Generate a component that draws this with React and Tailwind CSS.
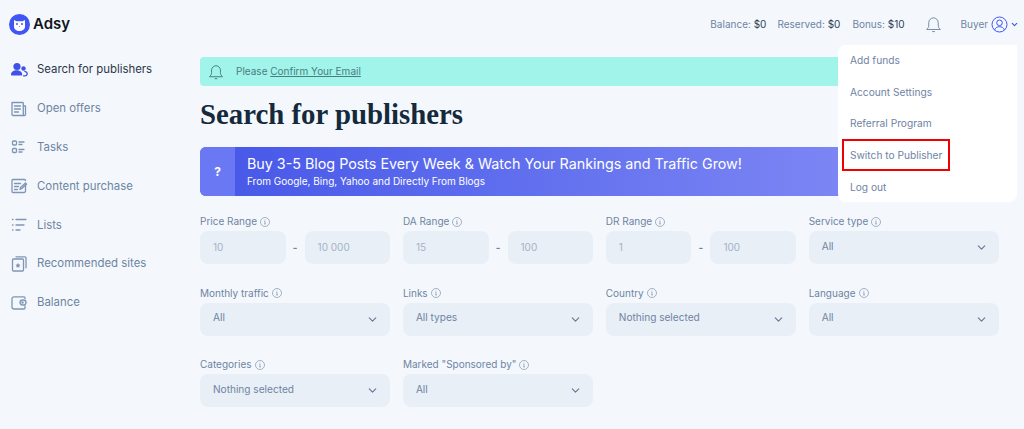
import React from 'react';
import { ChevronDown } from 'lucide-react';

const Icon = ({ children, className = 'text-[#7f95b5]' }) => (
  <svg width="18" height="18" viewBox="0 0 18 18" fill="none" stroke="currentColor" strokeWidth="1.3" strokeLinecap="round" strokeLinejoin="round" className={className}>
    {children}
  </svg>
);

const navItems = [
  {
    label: 'Search for publishers',
    active: true,
    icon: (
      <Icon className="text-[#3f51e8]">
        <circle cx="7" cy="5.500" r="3.600" fill="currentColor" stroke="none" />
        <path d="M1 13.500c0-2.700 2.400-4.300 5.600-4.300s5.600 1.600 5.600 4.300c0 .6-.4 1-1 1H2c-.6 0-1-.4-1-1z" fill="currentColor" stroke="none" />
        <circle cx="13.500" cy="7.500" r="2.200" fill="currentColor" stroke="none" />
        <path d="M13.500 14.800c2 .3 3.500-.4 3.700-1.700.2-1.300-.8-2.400-2.400-2.800" />
      </Icon>
    ),
  },
  {
    label: 'Open offers',
    icon: (
      <Icon>
        <path d="M2 2.500h10.500a.8.8 0 0 1 .8.8v12.200H3a1 1 0 0 1-1-1z" />
        <path d="M13.300 6h2.200v8.500a1 1 0 0 1-1 1h-1.200M4.500 6h6M4.500 9h6M4.500 12h4" />
      </Icon>
    ),
  },
  {
    label: 'Tasks',
    icon: (
      <Icon>
        <rect x="2.500" y="3" width="4" height="4" rx="1" />
        <rect x="2.500" y="10.500" width="4" height="4" rx="1" />
        <path d="M9 4h5M9 6.500h3M9 11.500h5M9 14h3" />
      </Icon>
    ),
  },
  {
    label: 'Content purchase',
    icon: (
      <Icon>
        <path d="M15.500 7v7a1.500 1.500 0 0 1-1.500 1.500H3A1 1 0 0 1 2 14.500V3.500a1 1 0 0 1 1-1h11.500a1 1 0 0 1 1 1" />
        <path d="M4.500 6.500h6M4.500 9.500h4M4.500 12.500h3M10 12.500l.5-2 5-4.500 1 1.200-5 4.500z" />
      </Icon>
    ),
  },
  {
    label: 'Lists',
    icon: (
      <Icon>
        <path d="M2.500 3.500h.5M2.500 9h.5M2.500 14h.5M6 3.500h10M6 9h8M6 14h4" />
      </Icon>
    ),
  },
  {
    label: 'Recommended sites',
    icon: (
      <Icon>
        <rect x="2.500" y="4" width="11" height="12" rx="1" />
        <path d="M6 1.800h9a1 1 0 0 1 1 1v10" />
        <path d="M8 7.800l.8 1.700 1.800.2-1.300 1.300.3 1.800L8 12l-1.600.8.3-1.800-1.300-1.300 1.800-.2z" fill="currentColor" stroke="none" />
      </Icon>
    ),
  },
  {
    label: 'Balance',
    icon: (
      <Icon>
        <path d="M15 4.500V3.800a1 1 0 0 0-1-1H4a2 2 0 0 0-2 2V13a2 2 0 0 0 2 2h10a1 1 0 0 0 1-1v-2" />
        <rect x="10" y="6" width="6" height="5" rx="2.500" />
        <circle cx="12.500" cy="8.500" r=".6" />
      </Icon>
    ),
  },
];

const Info = () => (
  <svg width="10" height="10" viewBox="0 0 10 10" fill="none" stroke="#7f93ad" strokeWidth=".7" className="ml-[3px] shrink-0">
    <circle cx="5" cy="5" r="4.500" />
    <path d="M4.200 4.300H5v2.500M4 6.900h2M5 2.600v.8" />
  </svg>
);

const Bell = ({ size = 18, className }) => (
  <svg width={size} height={size} viewBox="0 0 18 18" fill="none" stroke="currentColor" strokeWidth="1" strokeLinecap="round" strokeLinejoin="round" className={className}>
    <path d="M2 14c1.500-1.300 2-2.500 2-4.500V7a5 5 0 0 1 10 0v2.500c0 2 .5 3.200 2 4.500z" />
    <path d="M8 16.500h2" />
  </svg>
);

const Label = ({ children }) => (
  <div className="flex items-center h-[13px] mt-[1px] mb-[3px] text-[10px] leading-[13px] text-[#6e84a3]">
    {children}
    <Info />
  </div>
);

const RangeField = ({ label, from, to }) => (
  <div>
    <Label>{label}</Label>
    <div className="flex items-center">
      <div className="w-[86px] h-[33px] rounded-lg bg-[#e9eff6] pl-[13px] flex items-center text-[10px] text-[#a3b2c6]">{from}</div>
      <div className="w-[19px] text-center text-[10px] font-bold text-[#6e84a3]">-</div>
      <div className="w-[86px] h-[33px] rounded-lg bg-[#e9eff6] pl-[13px] flex items-center text-[10px] text-[#a3b2c6]">{to}</div>
    </div>
  </div>
);

const SelectField = ({ label, value }) => (
  <div>
    <Label>{label}</Label>
    <div className="h-[33px] rounded-lg bg-[#e9eff6] pl-[13px] pr-[11px] flex items-center justify-between text-[10.100px] text-[#6e84a3]">
      <span className="-mt-[2px]">{value}</span>
      <ChevronDown size={13} strokeWidth={2} className="text-[#62789a]" />
    </div>
  </div>
);

const Stat = ({ label, value }) => (
  <span className="text-[#6e84a3]">
    {label}: <span className="text-[#2c3e55]">{value}</span>
  </span>
);

const menuItems = ['Add funds', 'Account Settings', 'Referral Program', 'Switch to Publisher', 'Log out'];

const App = () => {
  return (
    <div className="relative w-[1024px] h-[429px] overflow-hidden bg-[#f4f8fc] font-['Inter',sans-serif]">
      <header className="h-[48px] mb-[2px] flex items-center pl-[9px] pr-[5px]">
        <div className="flex items-center">
          <svg width="21" height="21" viewBox="0 0 21 21">
            <circle cx="10.500" cy="10.500" r="10.500" fill="#3f55f4" />
            <path d="M5 6l2.500 1.300h6L16 6v6.500c0 2.800-2.500 4.500-5.500 4.500S5 15.300 5 12.500z" fill="#fff" />
            <circle cx="8" cy="10" r="1" fill="#3f55f4" />
            <circle cx="13" cy="10" r="1" fill="#3f55f4" />
            <path d="M9.800 12h1.400l-.7 1z" fill="#3f55f4" />
          </svg>
          <span className="ml-[3px] text-[15px] font-semibold text-[#10141c]">Adsy</span>
        </div>
        <div className="ml-auto flex items-center text-[10px]">
          <Stat label="Balance" value="$0" />
          <span className="ml-[11px]"><Stat label="Reserved" value="$0" /></span>
          <span className="ml-[12px]"><Stat label="Bonus" value="$10" /></span>
          <Bell size={17} className="ml-[20px] text-[#6e84a3]" />
          <span className="ml-[19px] text-[#6e84a3]">Buyer</span>
          <svg width="17" height="17" viewBox="0 0 17 17" fill="none" stroke="#3f55f4" strokeWidth="1" className="ml-[3px]">
            <circle cx="8.500" cy="8.500" r="7.500" />
            <circle cx="8.500" cy="6.800" r="2.800" />
            <path d="M3.500 14c1-2.300 2.700-3.300 5-3.300s4 1 5 3.300" />
          </svg>
          <ChevronDown size={9} strokeWidth={3} className="ml-[2px] text-[#3f55f4]" />
        </div>
      </header>

      <div className="flex">
        <aside className="w-[200px] shrink-0 pl-[10px] pt-[0.5px]">
          {navItems.map((item) => (
            <div key={item.label} className="h-[38.8px] flex items-center">
              <span className="w-[18px] flex justify-center">{item.icon}</span>
              <span className={`ml-[9px] text-[11.400px] ${item.active ? 'text-[#2c3648]' : 'text-[#6e84a3]'}`}>{item.label}</span>
            </div>
          ))}
        </aside>

        <main className="w-[799px] pt-[7px]">
          <div className="h-[29px] rounded-[4px] bg-[#a1f4ea] flex items-center pl-[8px] text-[10px] text-[#4b7c80]">
            <Bell size={16} className="text-[#3f7377]" />
            <span className="ml-[12px]">Please <span className="underline">Confirm Your Email</span></span>
          </div>

          <h1 className="mt-[10px] h-[42px] font-['Liberation_Serif',serif] text-[28.800px] leading-[36px] font-bold text-[#15293d]">Search for publishers</h1>

          <div className="mt-[9px] h-[49px] rounded-md flex overflow-hidden bg-gradient-to-r from-[#4656e8] to-[#8b90f6] text-white">
            <div className="w-[35px] bg-[#6b78f4] flex items-center justify-center text-[12px] font-bold">?</div>
            <div className="pl-[12px] pt-[8px]">
              <div className="text-[14.300px] leading-[18px]">Buy 3-5 Blog Posts Every Week &amp; Watch Your Rankings and Traffic Grow!</div>
              <div className="text-[10px] leading-[14px] mt-[1px]">From Google, Bing, Yahoo and Directly From Blogs</div>
            </div>
          </div>

          <div className="mt-[18px] grid grid-cols-4 gap-x-[12.600px] gap-y-[21.500px]">
            <RangeField label="Price Range" from="10" to="10 000" />
            <RangeField label="DA Range" from="15" to="100" />
            <RangeField label="DR Range" from="1" to="100" />
            <SelectField label="Service type" value="All" />
            <SelectField label="Monthly traffic" value="All" />
            <SelectField label="Links" value="All types" />
            <SelectField label="Country" value="Nothing selected" />
            <SelectField label="Language" value="All" />
            <SelectField label="Categories" value="Nothing selected" />
            <SelectField label={'Marked "Sponsored by"'} value="All" />
          </div>
        </main>
      </div>

      <div className="absolute left-[838px] top-[45px] w-[179px] h-[157px] bg-white rounded-b-lg rounded-tl-lg">
        {menuItems.map((item) => (
          <div key={item} className="relative h-[31.600px] pl-[12px] flex items-center text-[10.200px] text-[#6e84a3]">
            {item}
            {item === 'Switch to Publisher' && (
              <div className="absolute left-[4px] top-[-1px] w-[108px] h-[32px] border-2 border-[#f00000]" />
            )}
          </div>
        ))}
      </div>
    </div>
  );
};

export default App;
